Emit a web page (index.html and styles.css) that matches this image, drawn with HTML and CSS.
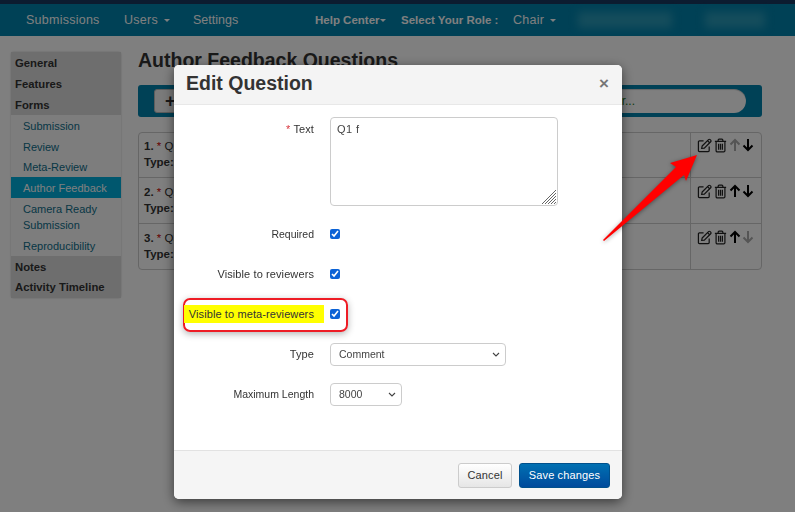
FILE: index.html
```html
<!DOCTYPE html>
<html lang="en">
<head>
<meta charset="utf-8">
<title>Author Feedback Questions</title>
<link rel="stylesheet" href="styles.css">
</head>
<body>
<div class="page">
  <div class="topstrip"></div>
  <nav class="navbar">
    <a class="nav-link nav-submissions">Submissions</a>
    <a class="nav-link nav-users">Users <span class="caret"></span></a>
    <a class="nav-link nav-settings">Settings</a>
    <a class="nav-link nav-strong nav-help">Help Center<span class="caret tight"></span></a>
    <span class="nav-link nav-strong nav-role">Select Your Role :</span>
    <a class="nav-link nav-chair">Chair <span class="caret"></span></a>
    <span class="blur blur-a"></span>
    <span class="blur blur-b"></span>
  </nav>
  <div class="content">
    <aside class="sidebar">
      <a class="side-head">General</a>
      <a class="side-head">Features</a>
      <a class="side-head">Forms</a>
      <a class="side-item">Submission</a>
      <a class="side-item">Review</a>
      <a class="side-item">Meta-Review</a>
      <a class="side-item active">Author Feedback</a>
      <a class="side-item double">Camera Ready Submission</a>
      <a class="side-item">Reproducibility</a>
      <a class="side-head">Notes</a>
      <a class="side-head last">Activity Timeline</a>
    </aside>
    <main class="main">
      <h1 class="page-title">Author Feedback Questions</h1>
      <div class="toolbar">
        <button class="add-btn"><b class="plus">+</b> Add Question</button>
        <div class="search">Filter...</div>
      </div>
      <div class="qtable">
        <div class="qrow r1">
          <div class="qtext"><div><b>1.</b> <span class="req">*</span> Q1 f</div><div><b>Type:</b> Comment</div></div>
          <div class="qactions">
            <svg class="ic" viewBox="0 0 16 16"><path d="M7 3H2.6A1.1 1.1 0 0 0 1.500 4.100V13.400A1.100 1.100 0 0 0 2.600 14.500H11.900A1.100 1.100 0 0 0 13 13.400V9"/><path d="M5.500 8.500L12.300 1.700a1.200 1.200 0 0 1 1.700 0l.6.600a1.200 1.200 0 0 1 0 1.700L7.800 10.800 5 11z"/><path d="M11.200 2.800l2.300 2.300"/></svg>
            <svg class="ic" viewBox="0 0 16 16"><path d="M2 3.500H14M5.500 3.500V2.300A1 1 0 0 1 6.500 1.300H9.500A1 1 0 0 1 10.500 2.300V3.500M3.300 3.500V13.500A1.300 1.300 0 0 0 4.600 14.800H11.400A1.300 1.300 0 0 0 12.700 13.500V3.500M6 6V12.500M8 6V12.500M10 6V12.500"/></svg>
            <svg class="ar muted" viewBox="0 0 12 14"><path d="M6 13V2M1.500 6.500L6 2l4.500 4.500"/></svg>
            <svg class="ar" viewBox="0 0 12 14"><path d="M6 1V12M1.500 7.500L6 12l4.500-4.500"/></svg>
          </div>
        </div>
        <div class="qrow r2">
          <div class="qtext"><div><b>2.</b> <span class="req">*</span> Q2 f</div><div><b>Type:</b> Comment</div></div>
          <div class="qactions">
            <svg class="ic" viewBox="0 0 16 16"><path d="M7 3H2.6A1.1 1.1 0 0 0 1.500 4.100V13.400A1.100 1.100 0 0 0 2.600 14.500H11.900A1.100 1.100 0 0 0 13 13.400V9"/><path d="M5.500 8.500L12.300 1.700a1.200 1.200 0 0 1 1.700 0l.6.600a1.200 1.200 0 0 1 0 1.700L7.800 10.800 5 11z"/><path d="M11.200 2.800l2.300 2.300"/></svg>
            <svg class="ic" viewBox="0 0 16 16"><path d="M2 3.500H14M5.500 3.500V2.300A1 1 0 0 1 6.500 1.300H9.500A1 1 0 0 1 10.500 2.300V3.500M3.300 3.500V13.500A1.300 1.300 0 0 0 4.600 14.800H11.400A1.300 1.300 0 0 0 12.700 13.500V3.500M6 6V12.500M8 6V12.500M10 6V12.500"/></svg>
            <svg class="ar" viewBox="0 0 12 14"><path d="M6 13V2M1.500 6.500L6 2l4.500 4.500"/></svg>
            <svg class="ar" viewBox="0 0 12 14"><path d="M6 1V12M1.500 7.500L6 12l4.500-4.500"/></svg>
          </div>
        </div>
        <div class="qrow r3">
          <div class="qtext"><div><b>3.</b> <span class="req">*</span> Q3 f</div><div><b>Type:</b> Comment</div></div>
          <div class="qactions">
            <svg class="ic" viewBox="0 0 16 16"><path d="M7 3H2.6A1.1 1.1 0 0 0 1.500 4.100V13.400A1.100 1.100 0 0 0 2.600 14.500H11.900A1.100 1.100 0 0 0 13 13.400V9"/><path d="M5.500 8.500L12.300 1.700a1.200 1.200 0 0 1 1.700 0l.6.600a1.200 1.200 0 0 1 0 1.700L7.800 10.800 5 11z"/><path d="M11.200 2.800l2.300 2.300"/></svg>
            <svg class="ic" viewBox="0 0 16 16"><path d="M2 3.500H14M5.500 3.500V2.300A1 1 0 0 1 6.500 1.300H9.500A1 1 0 0 1 10.500 2.300V3.500M3.300 3.500V13.500A1.300 1.300 0 0 0 4.600 14.800H11.400A1.300 1.300 0 0 0 12.700 13.500V3.500M6 6V12.500M8 6V12.500M10 6V12.500"/></svg>
            <svg class="ar" viewBox="0 0 12 14"><path d="M6 13V2M1.500 6.500L6 2l4.500 4.500"/></svg>
            <svg class="ar muted" viewBox="0 0 12 14"><path d="M6 1V12M1.500 7.500L6 12l4.500-4.500"/></svg>
          </div>
        </div>
      </div>
    </main>
  </div>
</div>

<div class="backdrop"></div>

<section class="modal">
  <header class="modal-head">
    <h2 class="modal-title">Edit Question</h2>
    <span class="close">×</span>
  </header>
  <form class="modal-body">
    <div class="row row-text">
      <label class="lbl"><span class="star">*</span> Text</label>
      <div class="ta-wrap">
        <textarea class="ta">Q1 f</textarea>
        <svg class="grip" viewBox="0 0 14 14"><path d="M14 0L0 14M14 3L3 14M14 6L6 14M14 9L9 14M14 12L12 14"/></svg>
      </div>
    </div>
    <div class="row"><label class="lbl lbl-tight">Required</label><input class="chk" type="checkbox" checked></div>
    <div class="row"><label class="lbl">Visible to reviewers</label><input class="chk" type="checkbox" checked></div>
    <div class="row row-mark">
      <div class="callout"></div>
      <label class="lbl"><span class="mark">Visible to meta-reviewers</span></label>
      <input class="chk" type="checkbox" checked>
    </div>
    <div class="row"><label class="lbl">Type</label><select class="sel sel-wide"><option>Comment</option></select></div>
    <div class="row"><label class="lbl lbl-tight">Maximum Length</label><select class="sel sel-narrow"><option>8000</option></select></div>
  </form>
  <footer class="modal-foot">
    <button class="btn btn-cancel">Cancel</button>
    <button class="btn btn-save">Save changes</button>
  </footer>
</section>

<svg class="arrow" viewBox="0 0 110 100">
  <polygon points="7,98 80,25 74,21 101,13 90,39 88,33 8,99"/>
</svg>
</body>
</html>
```
FILE: styles.css
```css
* { box-sizing: border-box; }
html, body { margin: 0; height: 100%; overflow: hidden; }
body { font-family: "Liberation Sans", Arial, sans-serif; background: #fff; color: #333; font-size: 12px; }

.page { width: 795px; height: 512px; }
.topstrip { height: 4px; background: #183860; }
.navbar { height: 32px; background: #0082ac; display: flex; align-items: center; padding-left: 26px; color: #fff; font-size: 12.5px; letter-spacing: .25px; position: relative; }
.nav-link { white-space: nowrap; }
.nav-strong { font-weight: bold; letter-spacing: 0; font-size: 11.5px; }
.nav-submissions { width: 98px; }
.nav-users { width: 69px; }
.nav-settings { width: 122px; letter-spacing: 0; }
.nav-help { width: 86px; }
.nav-role { width: 112px; }
.nav-chair { width: 65px; }
.caret { display: inline-block; width: 0; height: 0; border-left: 3px solid transparent; border-right: 3px solid transparent; border-top: 3px solid currentColor; vertical-align: middle; margin-left: 2px; }
.caret.tight { margin-left: 0; }
.blur { display: inline-block; height: 16px; background: #2a9ab8; filter: blur(4px); }
.blur-a { width: 94px; margin-right: 33px; }
.blur-b { width: 60px; }

.content { display: flex; padding: 16px 0 0 11px; gap: 17px; align-items: flex-start; }
.sidebar { width: 110px; display: flex; flex-direction: column; border-radius: 3px; box-shadow: 0 0 2px rgba(0,0,0,.25); background: #fafafa; }
.side-head { height: 21px; line-height: 23px; padding-left: 4px; background: #dcdcdc; font-weight: bold; font-size: 11.3px; color: #333; white-space: nowrap; }
.side-head.last { line-height: 21px; }
.side-item { height: 20.7px; line-height: 22.500px; padding-left: 12px; font-size: 11px; color: #0f6f8c; }
.side-item.active { background: #00aedc; color: #fff; height: 21px; }
.side-item.double { height: auto; line-height: 16px; padding-top: 3px; padding-bottom: 2px; padding-right: 6px; }

.main { width: 624px; }
.page-title { margin: 0 0 13px; font-size: 19.5px; line-height: 16px; height: 20px; color: #333; font-weight: bold; white-space: nowrap; }
.toolbar { height: 32px; background: #0082ac; border-radius: 3px; display: flex; align-items: center; padding: 0 16px; justify-content: space-between; }
.add-btn { width: 200px; height: 24px; border: 1px solid #bbb; border-radius: 3px; background: #f4f4f4; font: 12px "Liberation Sans", Arial, sans-serif; text-align: left; padding: 0 0 0 10px; color: #333; }
.plus { font-size: 18px; line-height: 18px; vertical-align: -1px; }
.search { width: 250px; height: 24px; border-radius: 12px; background: #fff; line-height: 24px; padding-left: 103px; color: #1c7a1c; font-size: 12px; box-shadow: inset 0 1px 1px rgba(0,0,0,.2); }

.qtable { margin-top: 15px; border: 1px solid #ccc; border-radius: 4px; }
.qrow { display: flex; border-bottom: 1px solid #ccc; }
.qrow.r1 { height: 45px; }
.qrow.r2 { height: 46px; }
.qrow.r3 { height: 45px; border-bottom: 0; }
.qtext { flex: 1; padding: 6px 5px 0; line-height: 16px; font-size: 11.5px; }
.r1 .qtext { padding-top: 5px; }
.req { color: #c00; }
.qactions { width: 71px; border-left: 1px solid #ccc; display: flex; align-items: flex-start; padding: 6px 0 0 6px; gap: 1px; }
.r1 .qactions { padding-top: 5px; }
.ic { width: 15px; height: 15px; flex: none; fill: none; stroke: #222; stroke-width: 1.300; }
.ar { width: 12px; height: 14px; flex: none; fill: none; stroke: #000; stroke-width: 2; }
.ar.muted { stroke: #aaa; }

.backdrop { position: fixed; inset: 0; background: rgba(0,0,0,.5); }

.modal { position: fixed; left: 174px; top: 65px; width: 448px; height: 434px; background: #fff; border-radius: 5px; box-shadow: 0 3px 12px rgba(0,0,0,.55); display: flex; flex-direction: column; overflow: visible; }
.modal-head { height: 40px; flex: none; background: #f4f4f4; border-bottom: 1px solid #e8e8e8; border-radius: 5px 5px 0 0; display: flex; align-items: center; justify-content: space-between; padding: 0 12px 2px; }
.modal-title { margin: 0; font-size: 19.5px; font-weight: bold; color: #333; }
.close { font-size: 17px; font-weight: bold; color: #777; line-height: 20px; margin-right: 1px; }
.modal-body { flex: 1; padding-top: 12px; display: flex; flex-direction: column; gap: 16px; }
.row { display: flex; align-items: center; height: 24px; position: relative; }
.row-text { height: 89px; align-items: flex-start; }
.lbl { width: 140px; text-align: right; font-size: 11px; letter-spacing: .1px; color: #333; margin-right: 16px; white-space: nowrap; flex: none; }
.lbl-tight { font-size: 10.5px; letter-spacing: 0; }
.row-text .lbl { padding-top: 6px; }
.star { color: #d9363e; }
.ta-wrap { position: relative; width: 228px; height: 89px; }
.ta { display: block; width: 228px; height: 89px; border: 1px solid #ccc; border-radius: 4px; padding: 4px 6px; font: 11px/14px "Liberation Sans", Arial, sans-serif; letter-spacing: .4px; color: #444; resize: none; background: #fff; }
.grip { position: absolute; right: 2px; bottom: 2px; width: 14px; height: 14px; fill: none; stroke: #666; stroke-width: 1; }
.chk { width: 10px; height: 10px; margin: 0; accent-color: #0b62d6; flex: none; }
.row-mark .lbl { position: relative; }
.mark { background: #ffff00; padding: 2px 10px 2px 5px; margin-right: -10px; display: inline-block; line-height: 14px; }
.callout { position: absolute; left: 9px; top: -4px; width: 165px; height: 34px; border: 2px solid #ee1c25; border-radius: 7px; box-shadow: 0 2px 7px rgba(0,0,0,.3); }
.sel { height: 23px; border: 1px solid #ccc; border-radius: 4px; appearance: none; font: 10.5px "Liberation Sans", Arial, sans-serif; color: #444; padding: 0 8px; background: #fff url("data:image/svg+xml,%3Csvg xmlns='http://www.w3.org/2000/svg' width='8' height='5'%3E%3Cpath d='M1 1l3 3 3-3' fill='none' stroke='%23444' stroke-width='1.100'/%3E%3C/svg%3E") no-repeat right 5px center; }
.sel-wide { width: 176px; }
.sel-narrow { width: 72px; }
.modal-foot { height: 49px; flex: none; background: #f5f5f5; border-top: 1px solid #e2e2e2; border-radius: 0 0 5px 5px; display: flex; justify-content: flex-end; align-items: center; gap: 7px; padding: 0 12px 0 0; }
.btn { height: 25px; border-radius: 3px; font: 11px "Liberation Sans", Arial, sans-serif; letter-spacing: .15px; padding: 0; }
.btn-cancel { width: 54px; background: linear-gradient(#fff, #e6e6e6); border: 1px solid #ccc; color: #333; }
.btn-save { width: 91px; background: linear-gradient(#0070b2, #004a9c); border: 1px solid #00508c; color: #fff; }

.arrow { position: fixed; left: 596px; top: 142px; width: 110px; height: 100px; fill: #ff0000; filter: drop-shadow(0 1px 2px rgba(0,0,0,.4)); }
```
